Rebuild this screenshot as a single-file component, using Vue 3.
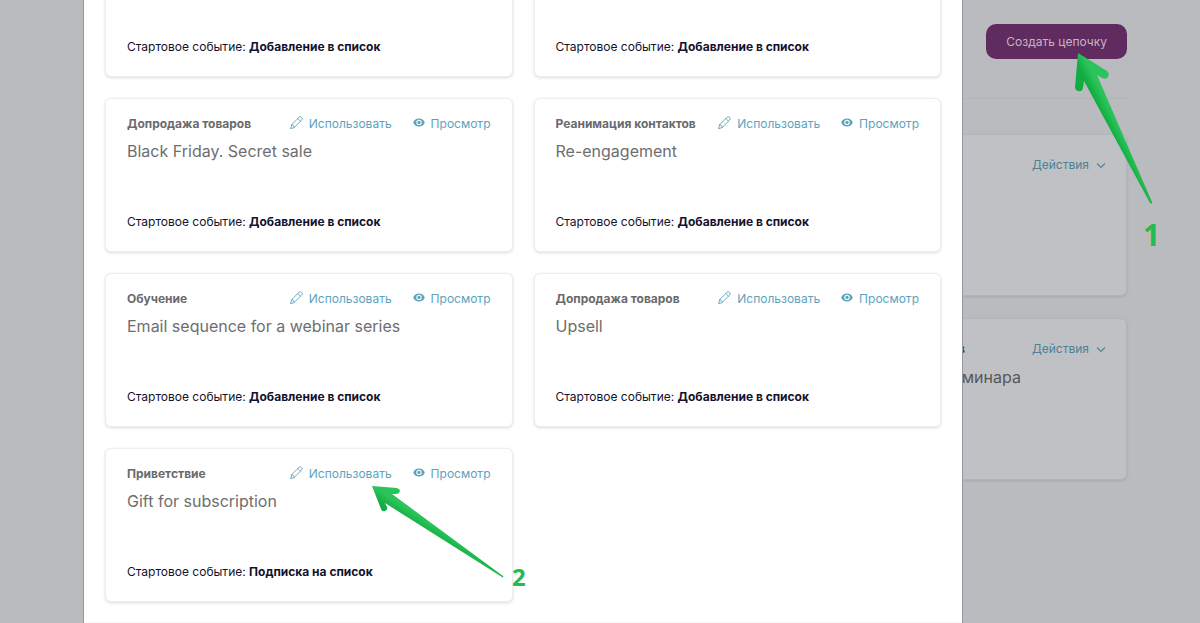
<script setup>
const templates = [
  { category: '', title: '', event: 'Добавление в список' },
  { category: '', title: '', event: 'Добавление в список' },
  { category: 'Допродажа товаров', title: 'Black Friday. Secret sale', event: 'Добавление в список' },
  { category: 'Реанимация контактов', title: 'Re-engagement', event: 'Добавление в список' },
  { category: 'Обучение', title: 'Email sequence for a webinar series', event: 'Добавление в список' },
  { category: 'Допродажа товаров', title: 'Upsell', event: 'Добавление в список' },
  { category: 'Приветствие', title: 'Gift for subscription', event: 'Подписка на список' },
]

const chains = [
  { status: '', title: '' },
  { status: 'в', title: 'минара' },
]
</script>

<template>
  <div class="screen">
    <main class="page">
      <header class="page-head">
        <button type="button" class="create">Создать цепочку</button>
      </header>
      <section v-for="(chain, i) in chains" :key="i" class="chain">
        <div class="chain-info">
          <strong v-if="chain.status" class="chain-status">{{ chain.status }}</strong>
          <span v-if="chain.title" class="chain-title">{{ chain.title }}</span>
        </div>
        <button type="button" class="actions">
          Действия
          <svg width="10" height="7" viewBox="0 0 10 7" aria-hidden="true">
            <path d="M1 1.5 L5 5.5 L9 1.5" fill="none" stroke="currentColor" stroke-width="1.1" />
          </svg>
        </button>
      </section>
    </main>

    <div class="backdrop">
      <div class="modal" role="dialog" aria-label="Шаблоны">
        <div class="grid">
          <article v-for="(t, i) in templates" :key="i" class="card">
            <div v-if="t.category" class="card-head">
              <strong class="category">{{ t.category }}</strong>
              <a href="#" class="link">
                <svg class="icon" width="13" height="13" viewBox="0 0 13 13" aria-hidden="true">
                  <g fill="none" stroke="currentColor" stroke-width="0.9" stroke-linejoin="round" stroke-linecap="round">
                    <path d="M0.7 12.3 L1.7 8.6 L9 1.3 Q10.3 0.1 11.6 1.4 Q12.9 2.7 11.7 4 L4.4 11.3 Z" />
                    <path d="M1.7 8.6 Q3.9 8.9 4.4 11.3 M7.8 2.5 L10.5 5.2" />
                  </g>
                </svg>
                <span>Использовать</span>
              </a>
              <a href="#" class="link">
                <svg class="icon" width="12" height="9" viewBox="0 0 12 9" aria-hidden="true">
                  <path fill="currentColor" fill-rule="evenodd" d="M6 0.4 C3.2 0.4 1.2 2 0.2 4.4 C1.2 6.8 3.2 8.4 6 8.4 C8.8 8.4 10.8 6.8 11.8 4.4 C10.8 2 8.8 0.4 6 0.4 Z M6 1.7 A2.7 2.7 0 1 1 6 7.1 A2.7 2.7 0 1 1 6 1.7 Z" />
                  <circle cx="6" cy="4.4" r="1.6" fill="currentColor" />
                </svg>
                <span>Просмотр</span>
              </a>
            </div>
            <h3 v-if="t.title" class="title">{{ t.title }}</h3>
            <p class="event">Стартовое событие: <strong>{{ t.event }}</strong></p>
          </article>
        </div>
        <footer class="modal-foot"></footer>
      </div>
    </div>

    <svg class="arrow arrow-create" width="78" height="154" viewBox="0 0 78 154" aria-hidden="true">
      <defs>
        <linearGradient id="shaft-a" gradientUnits="userSpaceOnUse" x1="22" y1="62" x2="38" y2="54">
          <stop offset="0.25" stop-color="#12ad42" />
          <stop offset="0.75" stop-color="#2bc45a" />
        </linearGradient>
      </defs>
      <path fill="url(#shaft-a)" d="M3 2 L32 20 Q35 23 33 26 Q31 29 27 27 L22 24 L77 151 Q77 154 75 152 L9 30 L8 37 Q7 41 3 40 Q0 39 0 36 Z" />
    </svg>
    <svg class="arrow arrow-use" width="134" height="94" viewBox="0 0 134 94" aria-hidden="true">
      <defs>
        <linearGradient id="shaft-b" gradientUnits="userSpaceOnUse" x1="38" y1="40" x2="47" y2="26">
          <stop offset="0.2" stop-color="#12ad42" />
          <stop offset="0.8" stop-color="#2bc45a" />
        </linearGradient>
      </defs>
      <path fill="url(#shaft-b)" d="M1 1 L26 3 Q29 4 29 6 Q28 9 25 9 L21 9 L132 91 Q133 93 131 92 L14 18 L16 22 Q17 25 14 26 Q11 27 10 24 Z" />
    </svg>
    <span class="step step-create">1</span>
    <span class="step step-use">2</span>
  </div>
</template>

<style>
body {
  margin: 0;
}
</style>

<style scoped>
.screen {
  position: relative;
  height: 100vh;
  overflow: hidden;
  background: #babbbf;
  font-family: Inter, "Liberation Sans", sans-serif;
  font-size: 12px;
  line-height: 20px;
  color: #14122e;
}

.page {
  padding: 24px 73px 0 105px;
}

.page-head {
  display: flex;
  justify-content: flex-end;
  padding-bottom: 39px;
  margin-bottom: 35px;
  border-bottom: 1px solid #b2b3b7;
}

.create {
  padding: 8px 20px 7px;
  border: 0;
  border-radius: 10px;
  background: #602b5e;
  color: #c5b5c8;
  font: inherit;
}

.chain {
  display: flex;
  justify-content: space-between;
  align-items: flex-start;
  box-sizing: border-box;
  min-height: 162px;
  margin-bottom: 22px;
  padding: 20px;
  border: 1px solid #b3b4b8;
  border-radius: 6px;
  background: #c0c1c4;
  box-shadow: 0 1px 3px #a6a7ab;
}

.chain-info {
  flex: 1;
  display: flex;
  flex-direction: column;
  gap: 8px;
  align-items: flex-end;
}

.chain-status {
  margin-right: 67px;
  color: #3b3c42;
}

.chain-title {
  margin-right: 11px;
  font-size: 16px;
  color: #56575b;
}

.actions {
  display: flex;
  align-items: center;
  gap: 7px;
  padding: 0;
  border: 0;
  background: none;
  color: #4b8198;
  font: inherit;
}

.backdrop {
  position: absolute;
  inset: 0;
  display: flex;
  align-items: flex-end;
  padding: 0 237px 0 83px;
}

.modal {
  flex: 1;
  border: solid #9697a3;
  border-width: 0 1px;
  background: #fff;
}

.grid {
  display: grid;
  grid-template-columns: repeat(2, minmax(0, 1fr));
  gap: 21px;
  padding: 20px 21px;
}

.modal-foot {
  height: 1px;
  background: #f7f7f8;
}

.card {
  display: flex;
  flex-direction: column;
  box-sizing: border-box;
  min-height: 154px;
  padding: 15px 21px 19px;
  border: 1px solid #eeeeef;
  border-radius: 6px;
  background: #fff;
  box-shadow: 0 1px 3px #dcdcde;
}

.card-head {
  display: flex;
  align-items: center;
  gap: 21px;
}

.category {
  flex: 1;
  white-space: nowrap;
  color: #6a6a6c;
}

.link {
  display: flex;
  align-items: center;
  gap: 6px;
  color: #5da3bd;
  text-decoration: none;
}

.icon {
  margin-bottom: 4px;
}

.title {
  margin: 5px 0 0;
  font-size: 16px;
  line-height: 24px;
  font-weight: 400;
  color: #6e6e70;
}

.event {
  margin: auto 0 0;
}

.arrow {
  position: absolute;
}

.arrow-create {
  left: 1075px;
  top: 51px;
}

.arrow-use {
  left: 371px;
  top: 485px;
}

.step {
  position: absolute;
  font: 700 24px/32px "Open Sans", sans-serif;
  color: #25bb53;
}

.step-create {
  left: 1143px;
  top: 219px;
  font-size: 30px;
}

.step-use {
  left: 512px;
  top: 561px;
}
</style>
